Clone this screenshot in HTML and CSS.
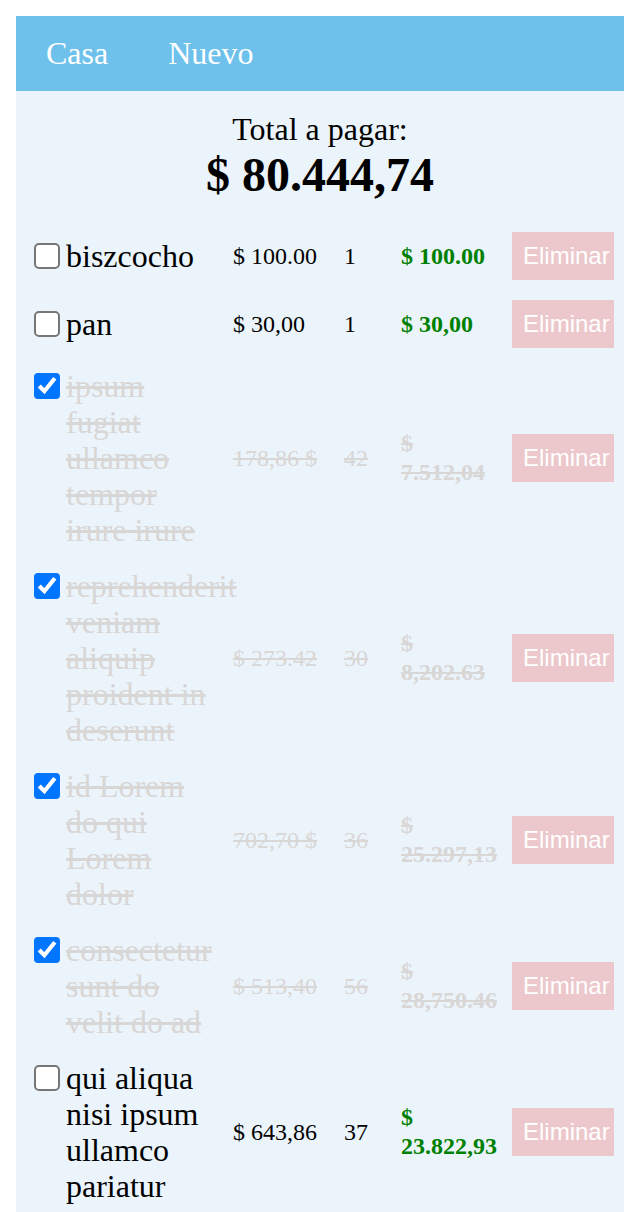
FILE: index.html
```html
<!DOCTYPE html>
<html lang="es">
<head>
<meta charset="utf-8">
<title>Lista</title>
<link rel="stylesheet" href="styles.css">
</head>
<body>
<nav class="nav">
  <a class="nav-link" href="#">Casa</a>
  <a class="nav-link" href="#">Nuevo</a>
</nav>
<main class="main">
  <section class="total">
    <div class="total-label">Total a pagar:</div>
    <div class="total-amount">$ 80.444,74</div>
  </section>
  <div class="list">
    <div class="row">
      <label class="item"><input type="checkbox" class="check"><span class="name">biszcocho</span></label>
      <span class="price">$ 100.00</span>
      <span class="qty">1</span>
      <span class="sum">$ 100.00</span>
      <button class="del">Eliminar</button>
    </div>
    <div class="row">
      <label class="item"><input type="checkbox" class="check"><span class="name">pan</span></label>
      <span class="price">$ 30,00</span>
      <span class="qty">1</span>
      <span class="sum">$ 30,00</span>
      <button class="del">Eliminar</button>
    </div>
    <div class="row done">
      <label class="item"><input type="checkbox" class="check" checked><span class="name">ipsum fugiat ullamco tempor irure irure</span></label>
      <span class="price">178,86 $</span>
      <span class="qty">42</span>
      <span class="sum">$ 7.512,04</span>
      <button class="del">Eliminar</button>
    </div>
    <div class="row done">
      <label class="item"><input type="checkbox" class="check" checked><span class="name">reprehenderit veniam aliquip proident in deserunt</span></label>
      <span class="price">$ 273.42</span>
      <span class="qty">30</span>
      <span class="sum">$ 8,202.63</span>
      <button class="del">Eliminar</button>
    </div>
    <div class="row done">
      <label class="item"><input type="checkbox" class="check" checked><span class="name">id Lorem do qui Lorem dolor</span></label>
      <span class="price">702,70 $</span>
      <span class="qty">36</span>
      <span class="sum">$ 25.297,13</span>
      <button class="del">Eliminar</button>
    </div>
    <div class="row done">
      <label class="item"><input type="checkbox" class="check" checked><span class="name">consectetur sunt do velit do ad</span></label>
      <span class="price">$ 513,40</span>
      <span class="qty">56</span>
      <span class="sum">$ 28,750.46</span>
      <button class="del">Eliminar</button>
    </div>
    <div class="row">
      <label class="item"><input type="checkbox" class="check"><span class="name">qui aliqua nisi ipsum ullamco pariatur</span></label>
      <span class="price">$ 643,86</span>
      <span class="qty">37</span>
      <span class="sum">$ 23.822,93</span>
      <button class="del">Eliminar</button>
    </div>
  </div>
</main>
</body>
</html>
```
FILE: styles.css
```css
html, body {
  margin: 0;
  padding: 0;
}
body {
  margin: 16px;
  font-family: "Liberation Serif", "Times New Roman", serif;
  color: #000;
  background: #fff;
}
.nav {
  display: flex;
  align-items: center;
  height: 75px;
  background: #6ec1eb;
}
.nav-link {
  padding: 0 30px;
  font-size: 32px;
  color: #fff;
  text-decoration: none;
}
.main {
  background: #ebf4fa;
}
.total {
  padding: 20px 0;
  text-align: center;
}
.total-label {
  font-size: 32px;
  line-height: 36px;
}
.total-amount {
  font-size: 48px;
  line-height: 55px;
  font-weight: bold;
}
.list {
  padding: 0 10px 0 18px;
}
.row {
  display: grid;
  grid-template-columns: 199px 111px 57px 111px 102px;
  align-items: center;
  padding: 10px 0;
}
.item {
  display: flex;
  align-items: flex-start;
  gap: 6px;
}
.check {
  zoom: 2;
  width: 13px;
  height: 13px;
  margin: 2.5px 0 0 0;
  flex: none;
}
.name {
  width: 150px;
  flex: none;
  font-size: 32px;
  line-height: 36px;
}
.price, .qty {
  font-size: 24px;
  line-height: 28px;
}
.sum {
  width: 96px;
  font-size: 24px;
  line-height: 29px;
  font-weight: bold;
  color: #008000;
}
.del {
  width: 102px;
  height: 48px;
  padding: 0 0 0 11px;
  border: none;
  background: #ecc8cc;
  color: #fff;
  font-family: "Liberation Sans", Arial, sans-serif;
  font-size: 24px;
  text-align: left;
  white-space: nowrap;
}
.done .name,
.done .price,
.done .qty,
.done .sum {
  color: #d9d6d6;
  text-decoration: line-through;
}
```
